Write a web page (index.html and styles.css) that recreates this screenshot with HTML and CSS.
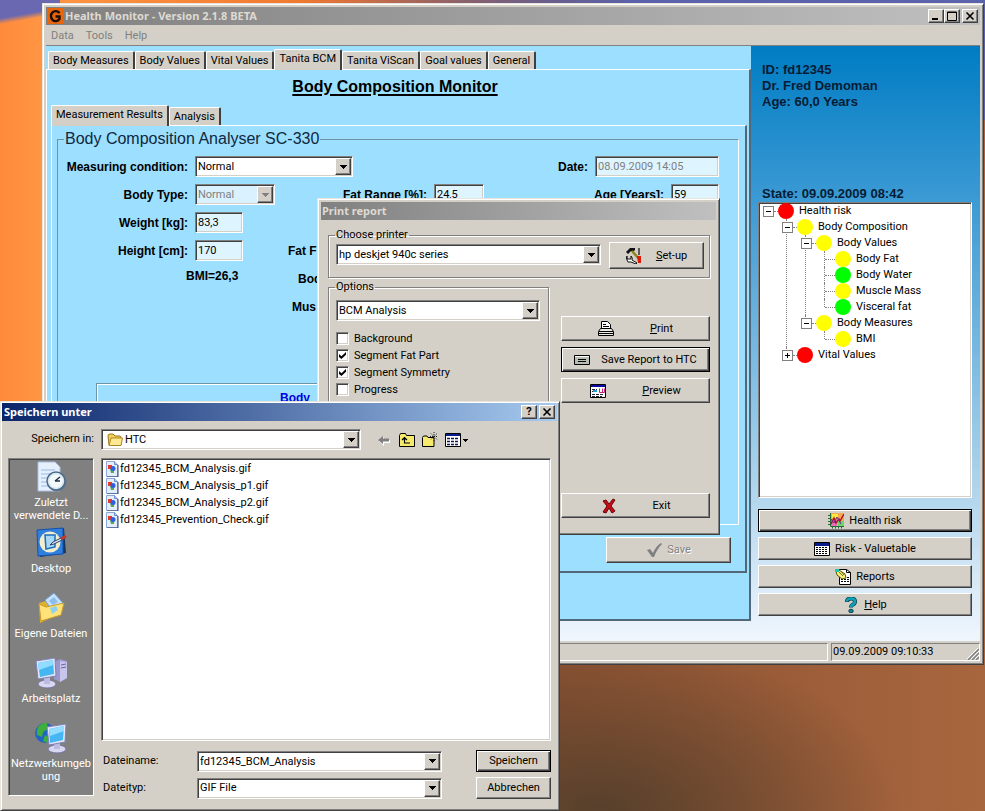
FILE: index.html
```html
<!DOCTYPE html>
<html lang="en">
<head>
<meta charset="utf-8">
<title>Health Monitor</title>
<link rel="stylesheet" href="styles.css">
</head>
<body>
<svg class="defs" aria-hidden="true">
  <symbol id="arrow" viewBox="0 0 7 4"><path d="M0 0h7v1H6v1H5v1H4v1H3V3H2V2H1V1H0z"/></symbol>
  <symbol id="gif" viewBox="0 0 16 16">
    <path d="M2.500.500h8l3 3v12h-11z" fill="#e4edfc" stroke="#8aa8dc"/><path d="M10.500.500v3h3" fill="#b5ccf4" stroke="#6b8fd0"/>
    <path d="M4 4h4v4H4z" fill="#e33a22"/><path d="M6 8h4v4H7z" fill="#5aaa4a"/><circle cx="9" cy="7.500" r="2.500" fill="#2d5fe0"/><path d="M14 4v12H3" fill="none" stroke="#33456c"/>
  </symbol>
</svg>

<main class="desktop">

<section class="window main-window">
  <header class="titlebar inactive">
    <svg class="app-icon" viewBox="0 0 16 16"><path fill="#e8650c" d="M0 0h16v16H0z"/><path d="M12.500 5.200A4.700 5 0 1 0 12.500 11V8.500H8.500" fill="none" stroke="#1b0d04" stroke-width="2.400"/></svg>
    <h1>Health Monitor - Version 2.1.8 BETA</h1>
    <div class="caption-buttons">
      <button><svg viewBox="0 0 12 10"><path d="M2 7h6v2H2z"/></svg></button>
      <button><svg viewBox="0 0 12 10"><path d="M1.500 1h9v8.500h-9zM1.500 1.500h9" fill="none" stroke="#000"/></svg></button>
      <button class="apart"><svg viewBox="0 0 12 10"><path d="M2.500 1.500l7 7m0-7l-7 7" stroke="#000" stroke-width="1.600"/></svg></button>
    </div>
  </header>
  <nav class="menubar"><a href="#data">Data</a><a href="#tools">Tools</a><a href="#help">Help</a></nav>

  <div class="client">
    <div class="workspace">
      <div class="tabs">
        <button>Body Measures</button><button>Body Values</button><button>Vital Values</button><button class="active">Tanita BCM</button><button>Tanita ViScan</button><button>Goal values</button><button>General</button>
      </div>
      <div class="page outer-page">
        <h2>Body Composition Monitor</h2>
        <div class="tabs inner-tabs"><button class="active">Measurement Results</button><button>Analysis</button></div>
        <div class="page inner-page">
          <fieldset class="analyser">
            <legend>Body Composition Analyser SC-330</legend>
            <div class="measures">
              <label class="c1" for="cond">Measuring condition:</label>
              <span class="combo wide"><select id="cond"><option>Normal</option></select><i><svg><use href="#arrow"/></svg></i></span>
              <label class="c5" for="date">Date:</label><input class="date" id="date" value="08.09.2009 14:05" disabled>
              <label class="c1" for="type">Body Type:</label>
              <span class="combo off"><select id="type" disabled><option>Normal</option></select><i><svg><use href="#arrow"/></svg></i></span>
              <label class="c3" for="fat">Fat Range [%]:</label><input id="fat" value="24,5">
              <label class="c5 two" for="age">Age [Years]:</label><input id="age" value="59">
              <label class="c1" for="weight">Weight [kg]:</label><input id="weight" class="small" value="83,3">
              <label class="c1" for="height">Height [cm]:</label><input id="height" class="small" value="170">
              <b class="cut">Fat F</b>
              <b class="bmi">BMI=26,3</b><b class="cut in-2">Bod</b>
              <b class="cut in-1">Mus</b>
            </div>
            <div class="result"><b>Body</b></div>
          </fieldset>
          <button class="btn save" disabled><svg viewBox="0 0 16 16"><path d="M1 8l3-1 3 4q3-7 8-10l1 1q-5 5-8 13H6z" fill="#808080"/></svg>Save</button>
        </div>
      </div>
    </div>

    <aside class="side">
      <p class="patient">ID: fd12345<br>Dr. Fred Demoman<br>Age: 60,0 Years</p>
      <p class="state">State: 09.09.2009 08:42</p>
      <ul class="tree">
        <li><div><s class="minus"></s><em class="red"></em>Health risk</div>
          <ul>
            <li><div><s class="minus"></s><em></em>Body Composition</div>
              <ul>
                <li><div><s class="minus"></s><em></em>Body Values</div>
                  <ul>
                    <li><div><s></s><em></em>Body Fat</div></li>
                    <li><div><s></s><em class="green"></em>Body Water</div></li>
                    <li><div><s></s><em></em>Muscle Mass</div></li>
                    <li><div><s></s><em class="green"></em>Visceral fat</div></li>
                  </ul></li>
                <li><div><s class="minus"></s><em></em>Body Measures</div>
                  <ul><li><div><s></s><em></em>BMI</div></li></ul></li>
              </ul></li>
            <li><div><s class="minus plus"></s><em class="red"></em>Vital Values</div></li>
          </ul></li>
      </ul>
      <div class="side-buttons">
        <button class="btn default"><svg viewBox="0 0 16 16"><path fill="#f4a850" d="M2 0h14v13H2z"/><path fill="#e96fb0" d="M2 7h7v6H2z"/><path fill="#6fd46c" d="M10 8h6v5h-6z"/><path fill="#ffe93c" d="M4 1h6v4H4z"/><path d="M2.500 0v13.500H16M0 2.500h2m-2 3h2m-2 3h2m-2 3h2m2.500 2v2m3-2v2m3-2v2m3-2v2" fill="none" stroke="#256b3a"/><path d="M3 11l3-6 2 5 3-4 1 2 4-7" fill="none" stroke="#b01028" stroke-width="1.400"/><path d="M3 6l3 4 3-6 4 7" fill="none" stroke="#6a2a90"/></svg>Health risk</button>
        <button class="btn"><svg viewBox="0 0 16 16"><path fill="#fff" stroke="#000" d="M.5 1.500h15v13H.5z"/><path fill="#0a1c8c" d="M1 2h14v3H1z"/><path d="M2 6.500h12M2 8.500h12M2 10.500h12M2 12.500h12" stroke="#000" stroke-dasharray="2 1"/></svg>Risk - Valuetable</button>
        <button class="btn"><svg viewBox="0 0 16 16"><path d="M4.500.5h7l4 3v12h-11z" fill="#fff" stroke="#000"/><path d="M11.500.5v3h4" fill="none" stroke="#000"/><path d="M6 8.500h8M6 10.500h8M6 12.500h8" stroke="#000" stroke-dasharray="2 1"/><path d="M1 2l3-1 6 4 1 4-4 1-5-4z" fill="#f6ef7d" stroke="#5d5600"/><path d="M0 0h4v3H0z" fill="#20c8a8"/><path d="M4 3l4 4M6 2l3 4" stroke="#77701a"/></svg>Reports</button>
        <button class="btn"><svg viewBox="0 0 16 16"><path d="M4 5q0-3.500 4-3.500t4 3q0 2-2 3t-2 3" fill="none" stroke="#063c48" stroke-width="4"/><path d="M4 4.500q0-3 4-3t4 3q0 2-2 3t-2 2.500" fill="none" stroke="#0ea3bd" stroke-width="2.600"/><ellipse cx="8" cy="14" rx="2.200" ry="1.800" fill="#0b8ca3" stroke="#063c48"/></svg><span><u>H</u>elp</span></button>
      </div>
    </aside>
  </div>
  <footer class="statusbar"><div></div><div class="clock">09.09.2009 09:10:33<svg viewBox="0 0 12 12"><path d="M1 12L12 1M5 12l7-7M9 12l3-3" stroke="#808080" stroke-width="1.500"/><path d="M0 11L11 0M4 11l8-8M8 11l4-4" stroke="#fff"/></svg></div></footer>
</section>

<section class="window print-window">
  <header class="titlebar inactive"><h1>Print report</h1></header>
  <div class="print-body">
    <fieldset class="printer">
      <legend>Choose printer</legend>
      <span class="combo"><select aria-label="Choose printer"><option>hp deskjet 940c series</option></select><i><svg><use href="#arrow"/></svg></i></span>
      <button class="btn"><svg viewBox="0 0 16 16"><path d="M0 4l4-4h5v2L7 4 5 3 2 6z" fill="#111"/><path d="M6 3l8 9" stroke="#8f8420" stroke-width="2.500"/><path d="M13 0v7" stroke="#333" stroke-width="1.500"/><path d="M11 8h4v7h-3z" fill="#e01808"/><path d="M1 8v3h4V8q2 2 1 4l5 3-1 1-5-2q-4 1-4-2-1-2 0-4" fill="#fff" stroke="#111"/></svg><span><u>S</u>et-up</span></button>
    </fieldset>
    <div class="print-columns">
      <fieldset class="options">
        <legend>Options</legend>
        <span class="combo"><select aria-label="Options"><option>BCM Analysis</option></select><i><svg><use href="#arrow"/></svg></i></span>
        <div class="checks">
          <label><input type="checkbox">Background</label>
          <label><input type="checkbox" checked>Segment Fat Part</label>
          <label><input type="checkbox" checked>Segment Symmetry</label>
          <label><input type="checkbox">Progress</label>
        </div>
      </fieldset>
      <div class="print-actions">
        <button class="btn"><svg viewBox="0 0 16 16"><path d="M3.500 7.500V.5h6l3 3v4" fill="#fff" stroke="#000"/><path d="M5 3.500h3M5 5.500h6" stroke="#000"/><path d="M.5 10.500l2-3h11l2 3v4H.5z" fill="#ece9e0" stroke="#000"/><path d="M1 10.500h14M1 12.500h14" stroke="#000"/></svg><span><u>P</u>rint</span></button>
        <button class="btn default"><svg viewBox="0 0 16 16"><path d="M.5 3.500h15v9H.5z" fill="#b8bdb4" stroke="#000"/><path d="M4 7.500h8M4 9.500h8" stroke="#000"/><path d="M1 4.500h14" stroke="#fff"/></svg><span>Save Report to HTC</span></button>
        <button class="btn"><svg viewBox="0 0 16 16"><path d="M.5 1.500h15v13H.5z" fill="#fff" stroke="#000"/><path d="M1 2h14v2H1z" fill="#0a0aa0"/><path d="M2 6.500h5M2 8.500h5M2 11.500h12M2 13.500h10" stroke="#223" stroke-dasharray="3 1"/><path d="M9.500 5.500v4h5v-4m-2 0v4" fill="none" stroke="#c02080"/><path d="M3 8h4" stroke="#18a0c8" stroke-width="2"/></svg><span><u>P</u>review</span></button>
        <button class="btn exit"><svg viewBox="0 0 16 16"><path d="M2 3l3-1 3 4 4-5 2 1-4 6 4 5-3 2-3-5-3 5-3-1 4-6z" fill="#c50d18" stroke="#6a0408"/></svg><span>Exit</span></button>
      </div>
    </div>
  </div>
</section>

<section class="window save-window">
  <header class="titlebar">
    <h1>Speichern unter</h1>
    <div class="caption-buttons">
      <button>?</button>
      <button class="apart"><svg viewBox="0 0 12 10"><path d="M2.500 1.500l7 7m0-7l-7 7" stroke="#000" stroke-width="1.600"/></svg></button>
    </div>
  </header>
  <div class="save-body">
    <label class="look-in" for="folder">Speichern in:</label>
    <div class="location">
      <span class="combo"><svg class="folder" viewBox="0 0 16 16"><path d="M1 4q0-2 2-2h3l2 2h5q1 0 1 2v7H2z" fill="#f2cf56" stroke="#9a741a"/><path d="M4 6h11.500l-1.500 7.500H2z" fill="#ffe992" stroke="#ad8423"/></svg><select id="folder"><option>HTC</option></select><i><svg><use href="#arrow"/></svg></i></span>
      <div class="tools">
        <svg viewBox="0 0 16 16"><path d="M3 9l5-4v3h6v3H8v3z" fill="#fff"/><path d="M2 8l5-4v2.500h6v3H7V12z" fill="#808080"/></svg>
        <svg viewBox="0 0 16 16"><path d="M.5 14.500v-11l1-2h5l1 2h8v11z" fill="#f5ea6c" stroke="#000"/><path d="M5.500 6v5H11M3 8l2.500-2.500L8 8" fill="none" stroke="#000" stroke-width="1.200"/></svg>
        <svg viewBox="0 0 16 16"><path d="M.5 14.500v-9l1-1.500h3.500l1 1.500h6v9z" fill="#f5ea6c" stroke="#000"/><path d="M12 0v9M8 4.500h8M9 1.500l6 6M15 1.500l-6 6" stroke="#222" stroke-dasharray="1 1"/></svg>
        <svg class="view" viewBox="0 0 24 16"><path d="M.5 1.500h15v13H.5z" fill="#fff" stroke="#000"/><path d="M1 2h14v2H1z" fill="#0a1c8c"/><path d="M2 6.500h12M2 9.500h12M2 12.500h12" stroke="#15154c" stroke-width="1.500" stroke-dasharray="3 1"/><path d="M18 7h5v1h-1v1h-1v1h-1V9h-1V8h-1z"/></svg>
      </div>
    </div>
    <nav class="places">
      <a href="#recent"><svg viewBox="0 0 32 32"><path d="M3 1h17l5 5v24H3z" fill="#e6effc" stroke="#a8c0e4"/><path d="M6 9h14M6 13h12M6 17h10M6 21h8M6 25h8" stroke="#98b9e8"/><circle cx="22" cy="21" r="9.500" fill="#66788c"/><circle cx="21" cy="20" r="9" fill="#dbeaf2" stroke="#4c6c88" stroke-width="1.500"/><circle cx="21" cy="20" r="6.500" fill="#f4fafc"/><path d="M20 20l5-4m-5 4h5" stroke="#183048" stroke-width="1.500"/></svg>Zuletzt<br>verwendete D...</a>
      <a href="#desktop"><svg viewBox="0 0 32 32"><path d="M3 4l26-3 2 25-26 4z" fill="#16365f"/><path d="M2 3l26-2v26L3 29z" fill="#2f7fdd" stroke="#1451ae"/><circle cx="15" cy="15" r="10.500" fill="#f2edcc"/><path d="M10 8h10v12l-9 2z" fill="#a8d8f6" stroke="#1a6ebc" stroke-width="1.500"/><path d="M15 18l3-3 8-4 1 2-8 4z" fill="#d8ecfa" stroke="#2d3d62"/><path d="M26 12l5-3" stroke="#c83622" stroke-width="3"/></svg>Desktop</a>
      <a href="#files"><svg viewBox="0 0 32 32"><path d="M4 11l7-2 3 3 10-3v13L5 31z" fill="#e3b02c"/><path d="M10 8l9-7 9 10-11 8z" fill="#c6e2fa" stroke="#6e9fd4"/><path d="M14 9l5-4 4 5-5 3z" fill="#8fbdec"/><path d="M4 12l7 3 18-4-3 12-20 6z" fill="#ffe27a" stroke="#c89a28"/><path d="M15 16l6-2 2 4-6 4z" fill="#8fd0ee"/></svg>Eigene Dateien</a>
      <a href="#computer"><svg viewBox="0 0 32 32"><path d="M19 5l6-3 7 2v17l-7 4-6-3z" fill="#9a96cc"/><path d="M25 4l7 1v16l-7 4z" fill="#c8c5ec"/><path d="M26 8l5-1m-5 4l5-1" stroke="#6764a0"/><ellipse cx="12" cy="27" rx="9" ry="4" fill="#d9d8f2" stroke="#75739f"/><path d="M9 20h6v7H9z" fill="#bdbbe2"/><path d="M1 4l19-3 1 18-18 3z" fill="#e5e6f9" stroke="#7b82b8"/><path d="M3 6l15-3 1 14-14 3z" fill="#45b6f2"/><path d="M3 6l15-3v5L4 13z" fill="#91dcff"/></svg>Arbeitsplatz</a>
      <a href="#network"><svg viewBox="0 0 32 32"><circle cx="10" cy="11" r="10" fill="#2264c4"/><path d="M3 5q5-5 9-4l1 6-5 3-1 5-5-2q-1-4 1-8M10 13l5 3-2 5-5-2z" fill="#3fae3b"/><ellipse cx="22" cy="27" rx="9" ry="4" fill="#d9d8f2" stroke="#75739f"/><path d="M19 20h6v7h-6z" fill="#bdbbe2"/><path d="M12 5l19-3-1 18-16 3z" fill="#e5e6f9" stroke="#7b82b8"/><path d="M14 7l15-3-1 14-13 3z" fill="#45b6f2"/><path d="M14 7l15-3v5l-14 5z" fill="#91dcff"/></svg>Netzwerkumgeb<br>ung</a>
    </nav>
    <div class="chooser">
      <ul class="files">
        <li><svg><use href="#gif"/></svg>fd12345_BCM_Analysis.gif</li>
        <li><svg><use href="#gif"/></svg>fd12345_BCM_Analysis_p1.gif</li>
        <li><svg><use href="#gif"/></svg>fd12345_BCM_Analysis_p2.gif</li>
        <li><svg><use href="#gif"/></svg>fd12345_Prevention_Check.gif</li>
      </ul>
      <div class="name-form">
        <label for="fname">Dateiname:</label>
        <span class="combo"><input id="fname" value="fd12345_BCM_Analysis"><i><svg><use href="#arrow"/></svg></i></span>
        <button class="btn default">Speichern</button>
        <label for="ftype">Dateityp:</label>
        <span class="combo"><select id="ftype"><option>GIF File</option></select><i><svg><use href="#arrow"/></svg></i></span>
        <button class="btn">Abbrechen</button>
      </div>
    </div>
  </div>
</section>

</main>
</body>
</html>
```
FILE: styles.css
```css
:root {
  --face: #d4d0c8;
  --shade: #808080;
  --dark: #404040;
  --cyan: #9cdfff;
}

* { box-sizing: border-box; }

body {
  margin: 0;
  font: 11px/16px Roboto, "Liberation Sans", sans-serif;
  color: #000;
}

h1, h2, p, ul { margin: 0; padding: 0; }
ul { list-style: none; }
a { color: inherit; text-decoration: none; }
button, input, select { font: inherit; color: inherit; border-radius: 0; margin: 0; }
.defs { display: none; }
svg { flex: none; }

.desktop {
  position: relative;
  min-height: 100vh;
  overflow: hidden;
  background:
    linear-gradient(170deg, #6a68b0 0, #6a68b0 18px, transparent 24px) 0 0 / 60px 100% no-repeat,
    linear-gradient(90deg, transparent 30%, #5c62ac 65%) 0 0 / 100% 120px no-repeat,
    radial-gradient(ellipse 300px 170px at 600px 811px, #57402c, transparent) no-repeat,
    linear-gradient(90deg, #ff8a3c 0, #ff9644 42px, #ee742c 350px, #8c5232 560px, #a8663e 100%);
}

/* Windows */
.window {
  position: absolute;
  display: flex;
  flex-direction: column;
  padding: 2px;
  background: var(--face);
  border: 1px solid;
  border-color: #e8e5de var(--dark) var(--dark) #e8e5de;
  box-shadow: inset 1px 1px #fff, inset -1px -1px var(--shade);
}
.main-window { left: 42px; right: 1px; top: 3px; padding: 3px; }
.print-window { left: 317px; top: 198px; width: 403px; padding: 3px; }
.save-window { left: 0; top: 401px; width: 560px; padding: 1px 2px 2px 1px; }

.titlebar {
  display: flex;
  align-items: center;
  height: 18px;
  padding: 0 2px;
  color: #fff;
  background: linear-gradient(90deg, #0a246a, #a6caf0);
}
.titlebar.inactive { padding-left: 1px; color: #dedad2; background: linear-gradient(90deg, #808080, #c0c0c0); }
.titlebar h1 { flex: 1; font: bold 11px/18px "Noto Sans", sans-serif; }
.app-icon { width: 16px; height: 16px; margin-right: 2px; }
.caption-buttons { display: flex; }
.caption-buttons button {
  display: grid;
  place-items: center;
  width: 16px;
  height: 14px;
  padding: 0;
  font-weight: bold;
  line-height: 12px;
  color: #000;
  background: var(--face);
  border: 1px solid;
  border-color: #fff var(--dark) var(--dark) #fff;
  box-shadow: inset -1px -1px var(--shade);
}
.caption-buttons svg { width: 12px; height: 10px; }
.caption-buttons .apart { margin-left: 2px; }

.menubar { display: flex; gap: 12px; padding: 2px 5px 1px; line-height: 17px; color: #808080; }

/* Raised buttons */
.btn {
  display: flex;
  align-items: center;
  justify-content: center;
  gap: 5px;
  min-height: 23px;
  padding: 0 6px;
  background: var(--face);
  border: 1px solid;
  border-color: #fff var(--dark) var(--dark) #fff;
  box-shadow: inset -1px -1px var(--shade);
}
.btn svg { width: 16px; height: 16px; }
.btn.default { border-color: #000; box-shadow: inset 1px 1px #fff, inset -1px -1px var(--dark), inset -2px -2px var(--shade); }
.btn:disabled { color: #808080; text-shadow: 1px 1px #fff; }

/* Sunken fields */
.combo, .measures input, .tree, .files {
  background: #fff;
  border: 1px solid;
  border-color: var(--shade) #fff #fff var(--shade);
  box-shadow: inset 1px 1px var(--dark), inset -1px -1px var(--face);
}
.combo { display: flex; align-items: center; height: 21px; padding: 1px; }
.combo select, .combo input {
  flex: 1;
  min-width: 0;
  height: 17px;
  padding: 0 1px;
  border: 0;
  background: none;
  appearance: none;
  opacity: 1;
}
.combo i {
  display: grid;
  place-items: center;
  width: 16px;
  height: 17px;
  pointer-events: none;
  background: var(--face);
  border: 1px solid;
  border-color: #fff var(--dark) var(--dark) #fff;
  box-shadow: inset -1px -1px var(--shade);
}
.combo i svg { width: 7px; height: 4px; }
.combo.off { color: #808080; background: #daf2ff; }
.combo.off i { fill: #808080; }

/* Main client area */
.client {
  display: flex;
  min-height: 596px;
  border-top: 1px solid var(--shade);
  background: linear-gradient(#007cc3, #3c9ad4 26%, #b8d9ee 78%, #f0f6fe);
}
.workspace {
  flex: 1;
  display: flex;
  flex-direction: column;
  margin-bottom: 20px;
  padding-top: 3px;
  background: var(--cyan);
}
.tabs { display: flex; align-items: flex-end; height: 20px; padding-left: 2px; }
.tabs button {
  height: 18px;
  padding: 0 4px;
  white-space: nowrap;
  background: var(--face);
  border: solid;
  border-width: 1px 2px 0 1px;
  border-color: #fff var(--dark) #fff #fff;
  border-radius: 2px 2px 0 0;
}
.tabs .active { position: relative; height: 21px; margin-bottom: -1px; padding: 0 4px 2px; }
.page {
  flex: 1;
  display: flex;
  flex-direction: column;
  border: solid;
  border-width: 1px 2px 2px 1px;
  border-color: #fff #506878 #506878 #fff;
}
.outer-page { padding: 8px 2px 46px 4px; }
.outer-page h2 {
  padding-right: 8px;
  font: bold 16px/18px "Liberation Sans", Arial, sans-serif;
  text-align: center;
  text-decoration: underline 2px;
  text-underline-offset: 2px;
}
.inner-tabs { margin-top: 9px; padding-left: 0; }
.inner-page { padding: 3px 6px 8px 5px; }

fieldset {
  min-width: 0;
  margin: 0;
  padding: 0;
  border: 1px solid #808080;
}
.analyser { flex: 1; display: flex; flex-direction: column; border-color: #6f94a6 #fff #fff #6f94a6; }
.analyser legend { margin-left: 6px; padding: 0 1px; font: 16px/20px "Liberation Sans", Arial, sans-serif; color: #102840; }
.measures {
  display: grid;
  grid-template-columns: 130px 80px 145px 50px 1fr 69px 48px;
  grid-auto-rows: 21px;
  gap: 7px;
  align-items: center;
  padding: 7px 19px 0 0;
}
.measures label, .measures b, .result { font: bold 12px/16px "Liberation Sans", Arial, sans-serif; white-space: nowrap; }
.measures label { justify-self: end; }
.measures input { width: 100%; height: 21px; padding: 0 2px; background: #def4ff; }
.measures input:disabled { color: #808080; }
.c1 { grid-column: 1; }
.c3 { grid-column: 3; }
.c5 { grid-column: 5; }
.measures .two { grid-column: 5 / 7; }
.wide { grid-column: 2 / 4; width: 158px; }
.measures .date { grid-column: 6 / 8; }
.measures .small { width: 48px; }
.cut { grid-column: 3; padding-left: 6px; }
.in-1 { padding-left: 10px; }
.in-2 { padding-left: 16px; }
.bmi { grid-column: 1 / 3; padding-left: 128px; align-self: start; }
.result {
  flex: 1;
  margin: 66px 38px 16px;
  padding: 6px 183px;
  border: 1px solid #6f94a6;
  box-shadow: inset 1px 1px #fff;
  color: #0000e0;
}
.save { align-self: flex-end; width: 125px; min-height: 26px; margin: 12px 8px 0 0; }

/* Patient side panel */
.side { display: flex; flex-direction: column; width: 229px; padding: 16px 8px 0 7px; }
.patient, .state { padding-left: 4px; font: bold 13px/16px "Liberation Sans", Arial, sans-serif; color: #061c34; }
.state { margin-top: 76px; }
.tree { height: 296px; padding: 0 4px; }
.tree ul { padding-left: 19px; }
.tree li { position: relative; }
.tree div { display: flex; align-items: center; height: 16px; }
.tree li li::before {
  content: "";
  position: absolute;
  left: 4px;
  top: 0;
  height: 100%;
  border-left: 1px dotted #808080;
}
.tree li li:last-child::before { height: 8px; }
.tree s { display: flex; align-items: center; width: 15px; height: 9px; }
.tree s::after { content: ""; flex: 1; margin-left: 5px; border-top: 1px dotted #808080; }
.tree .minus::before {
  content: "";
  position: relative;
  width: 9px;
  height: 9px;
  border: 1px solid #808080;
  background: linear-gradient(#000, #000) center / 5px 1px no-repeat, #fff;
}
.tree .plus::before {
  background: linear-gradient(#000, #000) center / 5px 1px no-repeat, linear-gradient(#000, #000) center / 1px 5px no-repeat, #fff;
}
.tree .minus::after { margin-left: 0; }
.tree em { width: 16px; height: 16px; margin-right: 5px; border-radius: 50%; background: #ff0; }
.tree em.red { background: #f00; }
.tree em.green { background: #0f0; }
.side-buttons { display: grid; gap: 5px; margin-top: 11px; }

.statusbar { display: flex; gap: 3px; padding-top: 2px; }
.statusbar div { flex: 1; height: 18px; border: 1px solid; border-color: var(--shade) #fff #fff var(--shade); }
.statusbar .clock { flex: none; display: flex; justify-content: space-between; align-items: flex-end; width: 149px; padding-left: 1px; }
.clock svg { width: 12px; height: 12px; }

/* Print report */
.print-body { padding: 8px 6px 13px 7px; }
.printer, .options { box-shadow: 1px 1px #fff, inset 1px 1px #fff; }
.printer legend, .options legend { margin-left: 6px; padding: 0 1px; line-height: 14px; }
.printer { display: flex; gap: 8px; height: 50px; }
.printer .combo { flex: 1; margin: 2px 0 0 7px; }
.printer .btn { width: 95px; height: 27px; margin: 0 5px 0 0; gap: 14px; }
.print-columns { display: flex; justify-content: space-between; margin-top: 2px; }
.options { width: 221px; height: 238px; }
.options .combo { margin: 6px 8px 0 7px; }
.checks { display: grid; gap: 4px; padding: 11px 7px; }
.checks label { display: flex; align-items: center; gap: 5px; line-height: 13px; }
.checks input {
  display: grid;
  place-items: center;
  width: 13px;
  height: 13px;
  appearance: none;
  background: #fff;
  border: 1px solid;
  border-color: var(--shade) #fff #fff var(--shade);
  box-shadow: inset 1px 1px var(--dark), inset -1px -1px var(--face);
}
.checks input:checked::after {
  content: "";
  width: 7px;
  height: 7px;
  background: #000;
  clip-path: polygon(0 30%, 35% 62%, 100% 0, 100% 40%, 35% 100%, 0 70%);
}
.print-actions { display: flex; flex-direction: column; gap: 6px; width: 149px; padding-top: 36px; }
.print-actions .btn { min-height: 25px; gap: 11px; }
.print-actions .btn:not(.default) { gap: 36px; }
.print-actions .exit { margin-top: auto; }

/* Save dialog */
.save-body {
  display: grid;
  grid-template-columns: 86px 1fr;
  gap: 8px 7px;
  padding: 8px 6px 9px;
}
.look-in { justify-self: end; line-height: 20px; }
.location { display: flex; align-items: center; gap: 15px; }
.location .combo { width: 260px; }
.folder { width: 16px; height: 16px; margin: 0 1px 0 4px; }
.tools { display: flex; gap: 7px; }
.tools svg { width: 16px; height: 16px; }
.tools .view { width: 24px; }
.places {
  display: grid;
  align-content: start;
  gap: 17px;
  padding-top: 2px;
  height: 338px;
  line-height: 13px;
  text-align: center;
  white-space: nowrap;
  color: #fff;
  background: #808080;
  border: 1px solid;
  border-color: var(--shade) #fff #fff var(--shade);
  box-shadow: inset 1px 1px var(--dark);
}
.places svg { display: block; width: 32px; height: 32px; margin: 0 auto 3px; }
.places a:nth-child(2) { margin-top: -12px; }
.chooser { display: flex; flex-direction: column; gap: 9px; }
.files { height: 283px; padding: 1px 2px; }
.files li { display: flex; align-items: center; height: 17px; }
.files svg { width: 16px; height: 16px; }
.name-form {
  display: grid;
  grid-template-columns: 94px 245px 75px;
  gap: 5px 0;
  align-items: center;
  padding-left: 2px;
}
.name-form .btn { margin-left: 34px; width: 75px; min-height: 22px; }
```
